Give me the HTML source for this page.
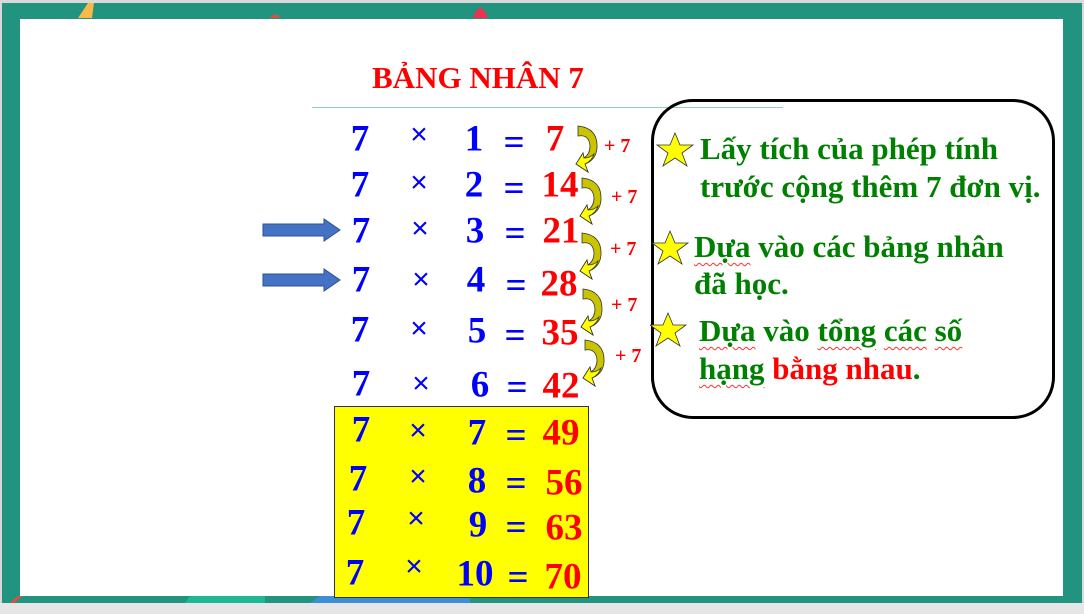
<!DOCTYPE html>
<html><head><meta charset="utf-8"><style>
body{margin:0;width:1084px;height:614px;overflow:hidden;background:#d9d9d9;position:relative;font-family:"Liberation Serif",serif}
.t{position:absolute;font-weight:bold;line-height:1;white-space:nowrap}
.n{font-size:37px;color:#0000ff;transform:translate(-50%,-50%)}
.r{font-size:37px;color:#ff0000;transform:translate(-50%,-50%)}
.x{position:absolute;font-size:30px;color:#0000ff;transform:translate(-50%,-50%);font-family:"Liberation Sans",sans-serif;line-height:1}
.g{font-size:31px;color:#008000;font-family:"Liberation Serif",serif}
.p{font-size:20px;color:#ff0000}
.u{text-decoration:underline wavy #ff3030;text-decoration-thickness:1px;text-underline-offset:5px}
</style></head><body>
<div style="position:absolute;left:2px;top:3px;width:1080px;height:600px;background:#21937f"></div>
<svg style="position:absolute;left:0;top:0" width="1084" height="614">
<path d="M78 18 L88 3 L94 3 L92 18Z" fill="#f6b94a"/>
<path d="M270 18 Q272 14 278 15 L280 18Z" fill="#e94b3c"/>
<path d="M473 18 Q480 -2 488 18Z" fill="#e9334f"/>
<path d="M10 603 L18 596 L22 596 L14 603Z" fill="#e94b3c"/>
<path d="M185 603 L190 596 L265 596 L265 603Z" fill="#1db898"/>
<path d="M310 603 L320 596 L470 596 L470 603Z" fill="#3c8fd6"/>
</svg>
<div style="position:absolute;left:20px;top:19px;width:1043px;height:577px;background:#fff"></div>
<div style="position:absolute;left:0;top:603px;width:1084px;height:11px;background:#e6e6e6"></div>
<div class="t" style="left:372px;top:62px;font-size:31px;color:#ff0000">BẢNG NHÂN 7</div>
<div style="position:absolute;left:312px;top:107px;width:471px;height:1px;background:#8fcfc4"></div>
<div style="position:absolute;left:334px;top:406px;width:253px;height:190px;background:#ffff00;border:1px solid #333"></div>
<svg style="position:absolute;left:262px;top:218px" width="80" height="80">
<path d="M1 6 H62 V1 L78 12 L62 23 V18 H1Z" fill="#4472c4" stroke="#2f528f"/>
<path d="M1 56 H62 V51 L78 62 L62 73 V68 H1Z" fill="#4472c4" stroke="#2f528f"/>
</svg>
<svg style="position:absolute;left:570px;top:120px" width="40" height="270">
<defs><path id="a" d="M8 6 Q28 8 27 28 Q26 40 15 44 L18 52 L6 44 L13 33 L14 38 Q20 34 20 26 Q19 14 8 16Z"/></defs>
<g fill="#c9c300" stroke="#333" stroke-width="0.8">
<use href="#a" transform="translate(0,0)"/>
<use href="#a" transform="translate(4,52)"/>
<use href="#a" transform="translate(4,107)"/>
<use href="#a" transform="translate(5,163)"/>
<use href="#a" transform="translate(7,214)"/>
</g>
<g fill="#ffff00" stroke="#333" stroke-width="0.8">
<path d="M13 33 L6 44 L18 52 L15 44 Q22 41 24 34 Q20 38 14 38Z"/>
<path d="M17 85 L10 96 L22 104 L19 96 Q26 93 28 86 Q24 90 18 90Z"/>
<path d="M17 140 L10 151 L22 159 L19 151 Q26 148 28 141 Q24 145 18 145Z"/>
<path d="M18 196 L11 207 L23 215 L20 207 Q27 204 29 197 Q25 201 19 201Z"/>
<path d="M20 247 L13 258 L25 266 L22 258 Q29 255 31 248 Q27 252 21 252Z"/>
</g>
</svg>
<div class="t p" style="left:604px;top:136px">+ 7</div>
<div class="t p" style="left:611px;top:187px">+ 7</div>
<div class="t p" style="left:610px;top:239px">+ 7</div>
<div class="t p" style="left:611px;top:295px">+ 7</div>
<div class="t p" style="left:615px;top:346px">+ 7</div>

<div class="t n" style="left:360px;top:139px">7</div><div class="x" style="left:419px;top:135px">×</div><div class="t n" style="left:474px;top:139px">1</div><div class="t n" style="left:514px;top:143px">=</div><div class="t r" style="left:555px;top:139px">7</div>
<div class="t n" style="left:360px;top:185px">7</div><div class="x" style="left:419px;top:183px">×</div><div class="t n" style="left:474px;top:185px">2</div><div class="t n" style="left:514px;top:189px">=</div><div class="t r" style="left:560px;top:185px">14</div>
<div class="t n" style="left:361px;top:231px">7</div><div class="x" style="left:420px;top:229px">×</div><div class="t n" style="left:475px;top:231px">3</div><div class="t n" style="left:515px;top:234px">=</div><div class="t r" style="left:561px;top:231px">21</div>
<div class="t n" style="left:361px;top:280px">7</div><div class="x" style="left:421px;top:280px">×</div><div class="t n" style="left:476px;top:280px">4</div><div class="t n" style="left:516px;top:286px">=</div><div class="t r" style="left:559px;top:284px">28</div>
<div class="t n" style="left:360px;top:330px">7</div><div class="x" style="left:419px;top:329px">×</div><div class="t n" style="left:477px;top:331px">5</div><div class="t n" style="left:515px;top:336px">=</div><div class="t r" style="left:560px;top:333px">35</div>
<div class="t n" style="left:361px;top:384px">7</div><div class="x" style="left:421px;top:384px">×</div><div class="t n" style="left:480px;top:385px">6</div><div class="t n" style="left:517px;top:388px">=</div><div class="t r" style="left:561px;top:386px">42</div>
<div class="t n" style="left:361px;top:430px">7</div><div class="x" style="left:418px;top:431px">×</div><div class="t n" style="left:477px;top:433px">7</div><div class="t n" style="left:516px;top:436px">=</div><div class="t r" style="left:561px;top:433px">49</div>
<div class="t n" style="left:358px;top:479px">7</div><div class="x" style="left:418px;top:477px">×</div><div class="t n" style="left:477px;top:481px">8</div><div class="t n" style="left:516px;top:484px">=</div><div class="t r" style="left:564px;top:483px">56</div>
<div class="t n" style="left:356px;top:523px">7</div><div class="x" style="left:416px;top:519px">×</div><div class="t n" style="left:478px;top:525px">9</div><div class="t n" style="left:516px;top:528px">=</div><div class="t r" style="left:564px;top:528px">63</div>
<div class="t n" style="left:355px;top:573px">7</div><div class="x" style="left:414px;top:567px">×</div><div class="t n" style="left:475px;top:574px">10</div><div class="t n" style="left:518px;top:578px">=</div><div class="t r" style="left:563px;top:577px">70</div>

<div style="position:absolute;left:651px;top:99px;width:398px;height:314px;border:3px solid #000;border-radius:42px"></div>
<svg style="position:absolute;left:650px;top:132px" width="50" height="230">
<defs><path id="s" d="M25 1 L30 13 L43 13 L32 21 L37 34 L25 26 L13 34 L18 21 L7 13 L20 13Z"/></defs>
<g fill="#ffff00" stroke="#333" stroke-width="0.8">
<use href="#s"/>
<use href="#s" transform="translate(-5,98)"/>
<use href="#s" transform="translate(-7,180)"/>
</g>
</svg>
<div class="t g" style="left:700px;top:133px">Lấy tích của phép tính</div>
<div class="t g" style="left:700px;top:171px">trước cộng thêm 7 đơn vị.</div>
<div class="t g" style="left:694px;top:231px"><span class="u">Dựa</span> vào các bảng nhân</div>
<div class="t g" style="left:694px;top:268px">đã học.</div>
<div class="t g" style="left:699px;top:315px"><span class="u">Dựa</span> vào <span class="u">tổng</span> <span class="u">các</span> <span class="u">số</span></div>
<div class="t g" style="left:699px;top:353px"><span class="u">hạng</span> <span style="color:#ff0000">bằng nhau</span>.</div>
</body></html>
